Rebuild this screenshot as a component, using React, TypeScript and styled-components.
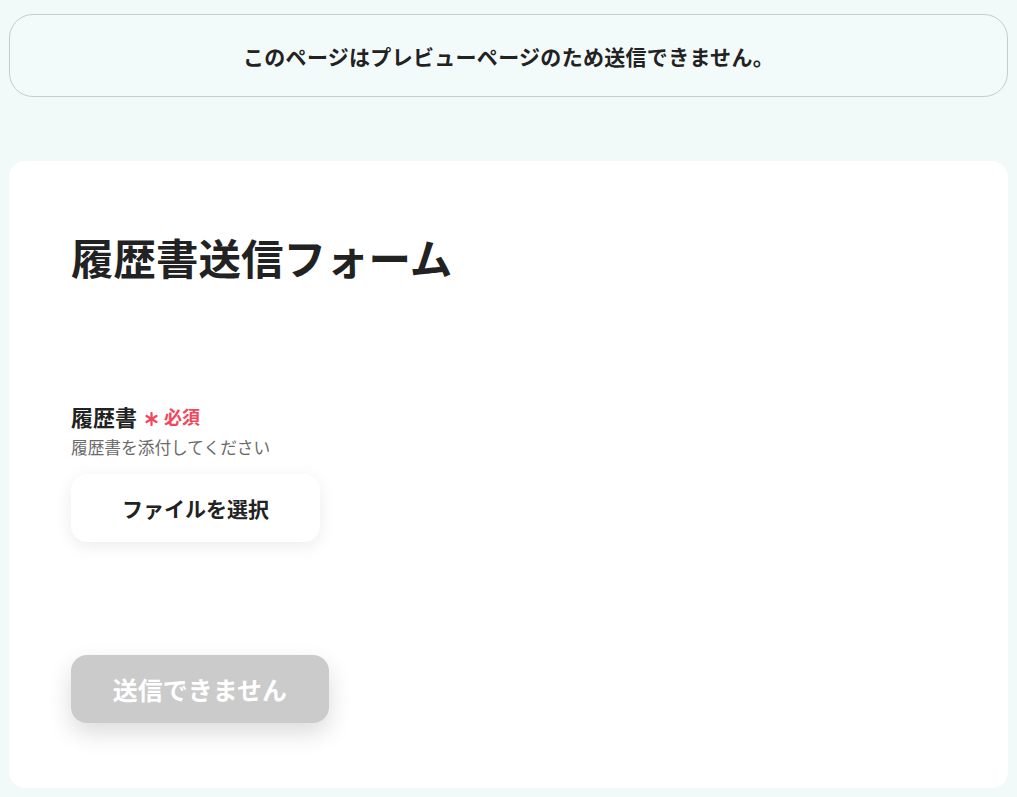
import React from "react";
import styled, { createGlobalStyle } from "styled-components";

const GlobalStyle = createGlobalStyle`
    html, body {
        margin: 0;
        padding: 0;
        background: #f1f9f9;
    }
    body {
        font-family: "Noto Sans CJK JP", "Noto Sans", sans-serif;
        color: #222;
    }
`

const Page = styled.div`
    padding: 14px 9px 10px;
    display: flex;
    flex-direction: column;
    gap: 64px;
`

const Banner = styled.div`
    height: 81px;
    border: 1px solid #cbcbcb;
    border-radius: 24px;
    background: #f3fafa;
    display: flex;
    align-items: center;
    justify-content: center;
    font-size: 21px;
    font-weight: 700;
    letter-spacing: 0.3px;
    color: #222;
`

const Card = styled.div`
    background: #fff;
    border-radius: 16px;
    padding: 64px 62px 65px;
`

const Title = styled.h1`
    margin: 0;
    font-size: 42.5px;
    font-weight: 700;
    line-height: 63px;
    color: #222;
`

const Field = styled.div`
    margin-top: 113px;
    display: flex;
    flex-direction: column;
    align-items: flex-start;
`

const LabelRow = styled.div`
    display: flex;
    align-items: center;
    font-size: 22px;
    font-weight: 700;
    line-height: 30px;
`

const Required = styled.span`
    color: #f2465a;
    font-size: 18px;
    font-weight: 700;
    display: flex;
    align-items: center;
    gap: 6px;
    margin-left: 8px;
`

const Star = styled.svg`
    width: 13px;
    height: 14px;
    margin-top: 6px;
`

const Hint = styled.div`
    margin-top: 4px;
    font-size: 16.7px;
    color: #6b6b6b;
    line-height: 24px;
`

const FileButton = styled.button`
    margin-top: 15px;
    width: 249px;
    height: 68px;
    border: none;
    border-radius: 16px;
    background: #fff;
    box-shadow: 0 4px 18px rgba(0, 0, 0, 0.08);
    font-family: inherit;
    font-size: 21px;
    font-weight: 700;
    color: #222;
`

const SubmitButton = styled.button`
    display: block;
    margin-top: 113px;
    width: 258px;
    height: 68px;
    border: none;
    border-radius: 16px;
    background: #cbcbcb;
    box-shadow: 0 10px 24px rgba(0, 0, 0, 0.14);
    font-family: inherit;
    font-size: 25px;
    font-weight: 700;
    color: #fff;
`

const Asterisk: React.FC = () => (
    <Star viewBox="0 0 13 14">
        <g stroke="#f2465a" strokeWidth="2.2" strokeLinecap="round">
            <line x1="6.5" y1="1" x2="6.5" y2="13" />
            <line x1="1.5" y1="4" x2="11.5" y2="10" />
            <line x1="11.5" y1="4" x2="1.5" y2="10" />
        </g>
    </Star>
)

const App: React.FC = () => {
    return (
        <>
            <GlobalStyle />
            <Page>
                <Banner>このページはプレビューページのため送信できません。</Banner>
                <Card>
                    <Title>履歴書送信フォーム</Title>
                    <Field>
                        <LabelRow>
                            履歴書
                            <Required>
                                <Asterisk />必須
                            </Required>
                        </LabelRow>
                        <Hint>履歴書を添付してください</Hint>
                        <FileButton type="button">ファイルを選択</FileButton>
                    </Field>
                    <SubmitButton type="button" disabled>送信できません</SubmitButton>
                </Card>
            </Page>
        </>
    )
}

export default App;
